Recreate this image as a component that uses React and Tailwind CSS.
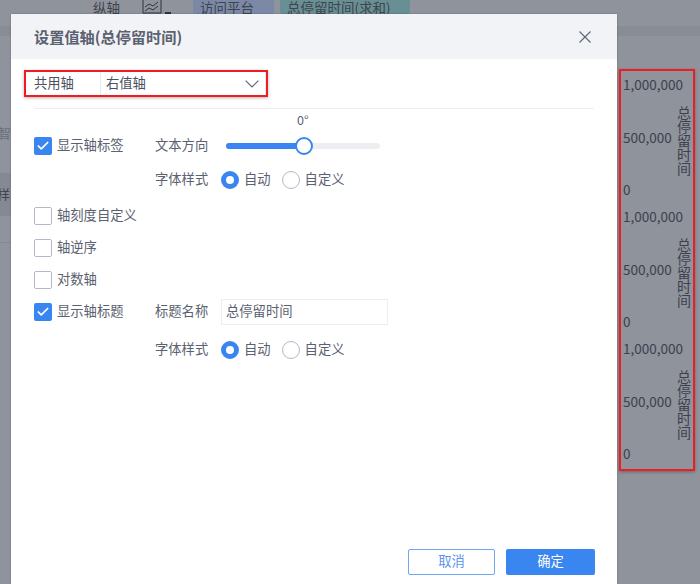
import { Check } from "lucide-react";

const font = { fontFamily: '"Noto Sans CJK SC", "Liberation Sans", sans-serif' };

function AxisGroup() {
  return (
    <div className="flex h-[132px] shrink-0 pl-[2px]">
      <div className="flex h-[125px] w-[54px] flex-col justify-between text-[13.5px] leading-[20px] whitespace-nowrap text-[#3c414c]">
        <span>1,000,000</span>
        <span>500,000</span>
        <span>0</span>
      </div>
      <div className="mt-[31px] flex w-[15px] flex-col text-[14px] leading-[14px] text-[#3c414c]">
        <span>总</span>
        <span>停</span>
        <span>留</span>
        <span>时</span>
        <span>间</span>
      </div>
    </div>
  );
}

function Checkbox({ label, checked }) {
  return (
    <div className="flex h-[18px] w-[121px] shrink-0 items-center gap-[5px]">
      {checked ? (
        <span className="flex h-[18px] w-[18px] items-center justify-center rounded-[2px] bg-[#3a86f0]">
          <Check size={14} strokeWidth={3} color="#fff" />
        </span>
      ) : (
        <span className="h-[18px] w-[18px] rounded-[2px] border border-[#b5b9c6] bg-white"></span>
      )}
      <span className="pb-[2px] text-[13.3px] text-[#5a6170]">{label}</span>
    </div>
  );
}

function Radio({ label, checked }) {
  return (
    <div className="flex items-center gap-[5px]">
      {checked ? (
        <span className="h-[18px] w-[18px] rounded-full border-[5px] border-[#3a86f0] bg-white"></span>
      ) : (
        <span className="h-[18px] w-[18px] rounded-full border border-[#b5b9c6] bg-white"></span>
      )}
      <span className="pb-[2px] text-[13.3px] text-[#5a6170]">{label}</span>
    </div>
  );
}

function FontStyleRow() {
  return (
    <div className="flex h-[18px] items-center">
      <span className="w-[66px] pb-[2px] text-[13.3px] text-[#5a6170]">字体样式</span>
      <div className="flex items-center gap-[11px]">
        <Radio label="自动" checked />
        <Radio label="自定义" />
      </div>
    </div>
  );
}

function Dialog() {
  return (
    <div className="absolute top-[14px] left-[11px] flex h-[570px] w-[606px] flex-col bg-white shadow-[0_0_2px_rgba(0,0,0,0.25)]">
      <div className="flex h-[45px] shrink-0 items-center justify-between bg-[#f2f3f7] pr-[26px] pl-[23px]">
        <span className="pb-[1px] text-[15.2px] font-bold text-[#5a6170]">设置值轴(总停留时间)</span>
        <svg width="12" height="12" viewBox="0 0 12 12" fill="none" stroke="#5a6478" strokeWidth="1.1">
          <path d="M0.5 0.5L11.5 11.5M11.5 0.5L0.5 11.5" />
        </svg>
      </div>

      <div className="mt-[11px] ml-[13px] flex h-[27px] w-[244px] items-center border-2 border-[#f01c24] shadow-[0_1px_3px_rgba(0,0,0,0.3)]">
        <span className="w-[74px] shrink-0 pb-[1px] pl-[8px] text-[13.3px] text-[#4a5060]">共用轴</span>
        <div className="flex h-full flex-1 items-center justify-between border-x border-[#e8eaee] pr-[6px] pl-[5px]">
          <span className="pb-[2px] text-[13.3px] text-[#4a5060]">右值轴</span>
          <svg width="14" height="8" viewBox="0 0 14 8" fill="none" stroke="#5a6478" strokeWidth="1.2">
            <path d="M0.7 0.7L7 7L13.3 0.7" />
          </svg>
        </div>
      </div>

      <div className="mt-[11px] mr-[23px] ml-[23px] h-px shrink-0 bg-[#eceef2]"></div>

      <div className="mt-[4px] ml-[23px] flex flex-col">
        <div className="ml-[263px] h-[16px] text-[12.5px] leading-[14px] text-[#5a6170]">0°</div>

        <div className="mt-[8px] flex h-[18px] items-center">
          <Checkbox label="显示轴标签" checked />
          <span className="w-[71px] pb-[2px] text-[13.3px] text-[#5a6170]">文本方向</span>
          <div className="relative h-[6px] w-[154px] rounded-full bg-[#eceef2]">
            <div className="h-full w-[77px] rounded-full bg-[#3a86f0]"></div>
            <span className="absolute top-[-6px] left-[69px] h-[18px] w-[18px] rounded-full border-2 border-[#3a86f0] bg-white"></span>
          </div>
        </div>

        <div className="mt-[16px] ml-[121px]">
          <FontStyleRow />
        </div>

        <div className="mt-[18px] flex flex-col gap-[14px]">
          <Checkbox label="轴刻度自定义" />
          <Checkbox label="轴逆序" />
          <Checkbox label="对数轴" />
          <div className="flex h-[18px] items-center">
            <Checkbox label="显示轴标题" checked />
            <span className="w-[66px] pb-[2px] text-[13.3px] text-[#5a6170]">标题名称</span>
            <div className="flex h-[26px] w-[167px] items-center border border-[#eceef2] pb-[2px] pl-[4px] text-[13.3px] text-[#5a6170]">
              总停留时间
            </div>
          </div>
        </div>

        <div className="mt-[20px] ml-[121px]">
          <FontStyleRow />
        </div>
      </div>

      <div className="mt-auto mr-[22px] mb-[9px] flex justify-end gap-[11px]">
        <button className="h-[26px] w-[87px] rounded-[2px] border border-[#6ea6f3] bg-white pb-[2px] text-[13.3px] text-[#5b95ea]">取消</button>
        <button className="h-[26px] w-[89px] rounded-[2px] bg-[#3a86f0] pb-[2px] text-[13.3px] text-white">确定</button>
      </div>
    </div>
  );
}

export default function App() {
  return (
    <div className="relative h-[584px] w-[700px] overflow-hidden bg-[#8f939c]" style={font}>
      <div className="flex h-[14px] items-center overflow-hidden pl-[93px] text-[13.5px] text-[#3f434c]">
        <span className="w-[49px] shrink-0">纵轴</span>
        <svg className="shrink-0" width="20" height="14" viewBox="0 0 20 14" fill="none" stroke="#2f333b" strokeWidth="1">
          <path d="M1 0V13H19V0" />
          <path d="M3 7L7 4L11 6L16 2M3 11L7 8L11 10L16 6" />
        </svg>
        <span className="mt-[11px] ml-[3px] h-[2px] w-[6px] shrink-0 bg-[#2f333b]"></span>
        <span className="ml-[22px] flex h-[14px] w-[81px] shrink-0 items-center rounded-b-[3px] bg-[#7c89a6] pl-[7px]">访问平台</span>
        <span className="ml-[6px] flex h-[14px] w-[130px] shrink-0 items-center rounded-b-[3px] bg-[#688f94] pl-[7px]">总停留时间(求和)</span>
      </div>

      <div className="mt-[12px] h-[10px] bg-[#888c95]"></div>

      <div className="absolute top-[123px] left-[-2px] text-[13px] text-[#6a6e78]">智</div>
      <div className="absolute top-[173px] left-0 h-[43px] w-[11px] bg-[#858993]"></div>
      <div className="absolute top-[242px] left-0 h-px w-[11px] bg-[#858993]"></div>
      <div className="absolute top-[184px] left-[-3px] text-[13px] text-[#3f434c]">样</div>

      <div className="mt-[33px] ml-[619px] flex h-[402px] w-[76px] flex-col border-2 border-[#f01c24] pt-[3px] shadow-[0_1px_3px_rgba(0,0,0,0.3)]">
        <AxisGroup />
        <AxisGroup />
        <AxisGroup />
      </div>

      <Dialog />
    </div>
  );
}
